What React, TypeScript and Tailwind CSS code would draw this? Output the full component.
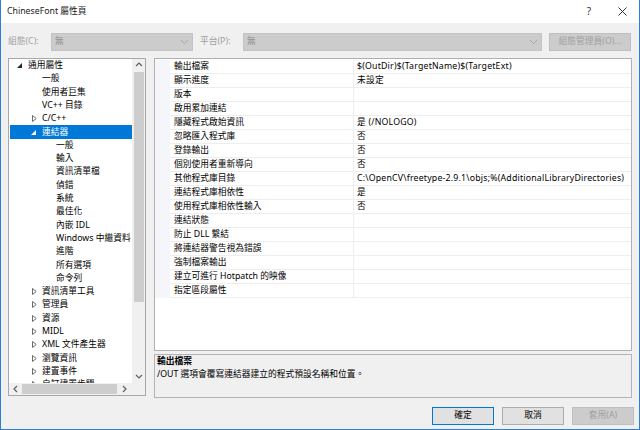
import React from "react";

const FONT = '"Noto Sans", "Noto Sans CJK TC", sans-serif';

type TreeItem = { label: string; level: number; arrow?: "open" | "closed"; selected?: boolean };

const treeItems: TreeItem[] = [
  { label: "通用屬性", level: 0, arrow: "open" },
  { label: "一般", level: 1 },
  { label: "使用者巨集", level: 1 },
  { label: "VC++ 目錄", level: 1 },
  { label: "C/C++", level: 1, arrow: "closed" },
  { label: "連結器", level: 1, arrow: "open", selected: true },
  { label: "一般", level: 2 },
  { label: "輸入", level: 2 },
  { label: "資訊清單檔", level: 2 },
  { label: "偵錯", level: 2 },
  { label: "系統", level: 2 },
  { label: "最佳化", level: 2 },
  { label: "內嵌 IDL", level: 2 },
  { label: "Windows 中繼資料", level: 2 },
  { label: "進階", level: 2 },
  { label: "所有選項", level: 2 },
  { label: "命令列", level: 2 },
  { label: "資訊清單工具", level: 1, arrow: "closed" },
  { label: "管理員", level: 1, arrow: "closed" },
  { label: "資源", level: 1, arrow: "closed" },
  { label: "MIDL", level: 1, arrow: "closed" },
  { label: "XML 文件產生器", level: 1, arrow: "closed" },
  { label: "瀏覽資訊", level: 1, arrow: "closed" },
  { label: "建置事件", level: 1, arrow: "closed" },
  { label: "自訂建置步驟", level: 1, arrow: "closed" },
];

const rows: [string, string][] = [
  ["輸出檔案", "$(OutDir)$(TargetName)$(TargetExt)"],
  ["顯示進度", "未設定"],
  ["版本", ""],
  ["啟用累加連結", ""],
  ["隱藏程式啟始資訊", "是 (/NOLOGO)"],
  ["忽略匯入程式庫", "否"],
  ["登錄輸出", "否"],
  ["個別使用者重新導向", "否"],
  ["其他程式庫目錄", "C:\\OpenCV\\freetype-2.9.1\\objs;%(AdditionalLibraryDirectories)"],
  ["連結程式庫相依性", "是"],
  ["使用程式庫相依性輸入", "否"],
  ["連結狀態", ""],
  ["防止 DLL 繫結", ""],
  ["將連結器警告視為錯誤", ""],
  ["強制檔案輸出", ""],
  ["建立可進行 Hotpatch 的映像", ""],
  ["指定區段屬性", ""],
];

function Arrow({ kind, selected }: { kind?: "open" | "closed"; selected?: boolean }) {
  if (kind === "open") {
    return (
      <svg width="5" height="5" viewBox="0 0 5 5" className="ml-[3px]">
        <polygon points="5,0 5,5 0,5" fill={selected ? "#ffffff" : "#262626"} />
      </svg>
    );
  }
  if (kind === "closed") {
    return (
      <svg width="5" height="7" viewBox="0 0 5 7" className="ml-[4px]">
        <polygon points="0.5,0.5 4.2,3.5 0.5,6.5" fill="none" stroke="#6a6a6a" strokeWidth="1" />
      </svg>
    );
  }
  return null;
}

function Chevron({ dir }: { dir: "up" | "down" | "left" | "right" }) {
  const d =
    dir === "up"
      ? "M1 5 L4 2 L7 5"
      : dir === "down"
      ? "M1 2 L4 5 L7 2"
      : dir === "left"
      ? "M5 1 L2 4 L5 7"
      : "M2 1 L5 4 L2 7";
  return (
    <svg width="8" height="8" viewBox="0 0 8 8">
      <path d={d} fill="none" stroke="#606060" strokeWidth="1.2" />
    </svg>
  );
}

function ComboChevron() {
  return (
    <svg width="9" height="6" viewBox="0 0 9 6">
      <path d="M1 1 L4.5 4.5 L8 1" fill="none" stroke="#a6a6a6" strokeWidth="1" />
    </svg>
  );
}

export default function App() {
  return (
    <div
      className="w-[640px] h-[430px] flex flex-col bg-[#f0f0f0] border-x border-b border-[#2b7fd6] overflow-hidden text-[8.75px] text-black"
      style={{ fontFamily: FONT }}
    >
      {/* Title bar */}
      <div className="h-[23px] bg-white flex items-center pl-[6px] pr-[12px] shrink-0">
        <span className="text-[8.75px] text-[#1a1a1a]">ChineseFont 屬性頁</span>
        <span className="ml-auto mr-[27px] text-[10px] text-[#333]">?</span>
        <svg width="9" height="9" viewBox="0 0 9 9">
          <path d="M0.5 0.5 L8.5 8.5 M8.5 0.5 L0.5 8.5" stroke="#333" strokeWidth="1" />
        </svg>
      </div>

      {/* Toolbar */}
      <div className="flex items-center h-[18px] mt-[10px] pl-[7px] shrink-0 text-[#a0a0a0]">
        <span className="w-[43px]">組態(C):</span>
        <div className="w-[142px] h-[18px] bg-[#cccccc] border border-[#c4c4c4] flex items-center pl-[3px] pr-[3px] text-[#8a8a8a]">
          <span>無</span>
          <span className="ml-auto">
            <ComboChevron />
          </span>
        </div>
        <span className="w-[43px] ml-[7px]">平台(P):</span>
        <div className="w-[299px] h-[18px] bg-[#cccccc] border border-[#c4c4c4] flex items-center pl-[3px] pr-[3px] text-[#8a8a8a]">
          <span>無</span>
          <span className="ml-auto">
            <ComboChevron />
          </span>
        </div>
        <div className="w-[82px] h-[18px] ml-[7px] bg-[#cccccc] border border-[#bfbfbf] flex items-center justify-center">
          組態管理員(O)...
        </div>
      </div>

      {/* Main */}
      <div className="flex mt-[7px] pl-[7px] gap-[8px] shrink-0">
        {/* Tree */}
        <div className="w-[138px] h-[338px] border border-[#a8a8a8] bg-white flex flex-col">
          <div className="flex flex-1 min-h-0">
            <div className="flex-1 min-w-0 overflow-hidden pl-[1px]">
              {treeItems.map((it, i) => (
                <div
                  key={i}
                  className={
                    "h-[13.3px] flex items-center whitespace-nowrap " +
                    (it.selected ? "bg-[#0078d7] text-white " : "") +
                    (it.level === 0 ? "pl-[4px]" : it.level === 1 ? "pl-[18px]" : "pl-[32px]")
                  }
                >
                  <span className="w-[14px] shrink-0 flex items-center">
                    <Arrow kind={it.arrow} selected={it.selected} />
                  </span>
                  <span>{it.label}</span>
                </div>
              ))}
            </div>
            {/* vertical scrollbar */}
            <div className="w-[13px] bg-[#f0f0f0] flex flex-col items-center">
              <div className="h-[12px] flex items-center justify-center">
                <Chevron dir="up" />
              </div>
              <div className="w-[10px] h-[230px] bg-[#cdcdcd] mt-[1px]" />
              <div className="flex-1" />
              <div className="h-[13px] flex items-center justify-center">
                <Chevron dir="down" />
              </div>
            </div>
          </div>
          {/* horizontal scrollbar */}
          <div className="h-[12px] flex shrink-0">
            <div className="flex-1 bg-[#f0f0f0] flex items-center">
              <div className="w-[13px] flex justify-center">
                <Chevron dir="left" />
              </div>
              <div className="w-[95px] h-[10px] bg-[#cdcdcd]" />
              <div className="flex-1 flex justify-center">
                <Chevron dir="right" />
              </div>
            </div>
            <div className="w-[13px] bg-[#f0f0f0]" />
          </div>
        </div>

        {/* Right column */}
        <div className="w-[478px] flex flex-col">
          <div className="h-[293px] border border-[#b0b0b0] bg-white flex flex-col overflow-hidden">
            <div className="h-[1px]" />
            {rows.map(([n, v], i) => (
              <div key={i} className="h-[14px] flex shrink-0">
                <div className="w-[15px] bg-[#f4f6f9]" />
                <div className="w-[184px] pl-[4px] flex items-center border-b border-r border-[#eeeeee] whitespace-nowrap">
                  {n}
                </div>
                <div className="flex-1 pl-[3px] flex items-center border-b border-[#eeeeee] whitespace-nowrap overflow-hidden tracking-[0.2px]">
                  {v}
                </div>
              </div>
            ))}
          </div>
          <div className="h-[44px] mt-[3px] border border-[#b4b4b4] bg-[#f0f0f0] px-[2px] pt-[0px] leading-[13px]">
            <div className="font-bold">輸出檔案</div>
            <div>/OUT 選項會覆寫連結器建立的程式預設名稱和位置。</div>
          </div>
        </div>
      </div>

      {/* Buttons */}
      <div className="flex justify-end mt-[9px] pr-[5px] gap-[8px] shrink-0">
        <div className="w-[62px] h-[18px] bg-[#e1e1e1] border border-[#0078d7] flex items-center justify-center">
          確定
        </div>
        <div className="w-[62px] h-[18px] bg-[#e1e1e1] border border-[#adadad] flex items-center justify-center">
          取消
        </div>
        <div className="w-[62px] h-[18px] bg-[#cccccc] border border-[#bfbfbf] text-[#a0a0a0] flex items-center justify-center">
          套用(A)
        </div>
      </div>
    </div>
  );
}
